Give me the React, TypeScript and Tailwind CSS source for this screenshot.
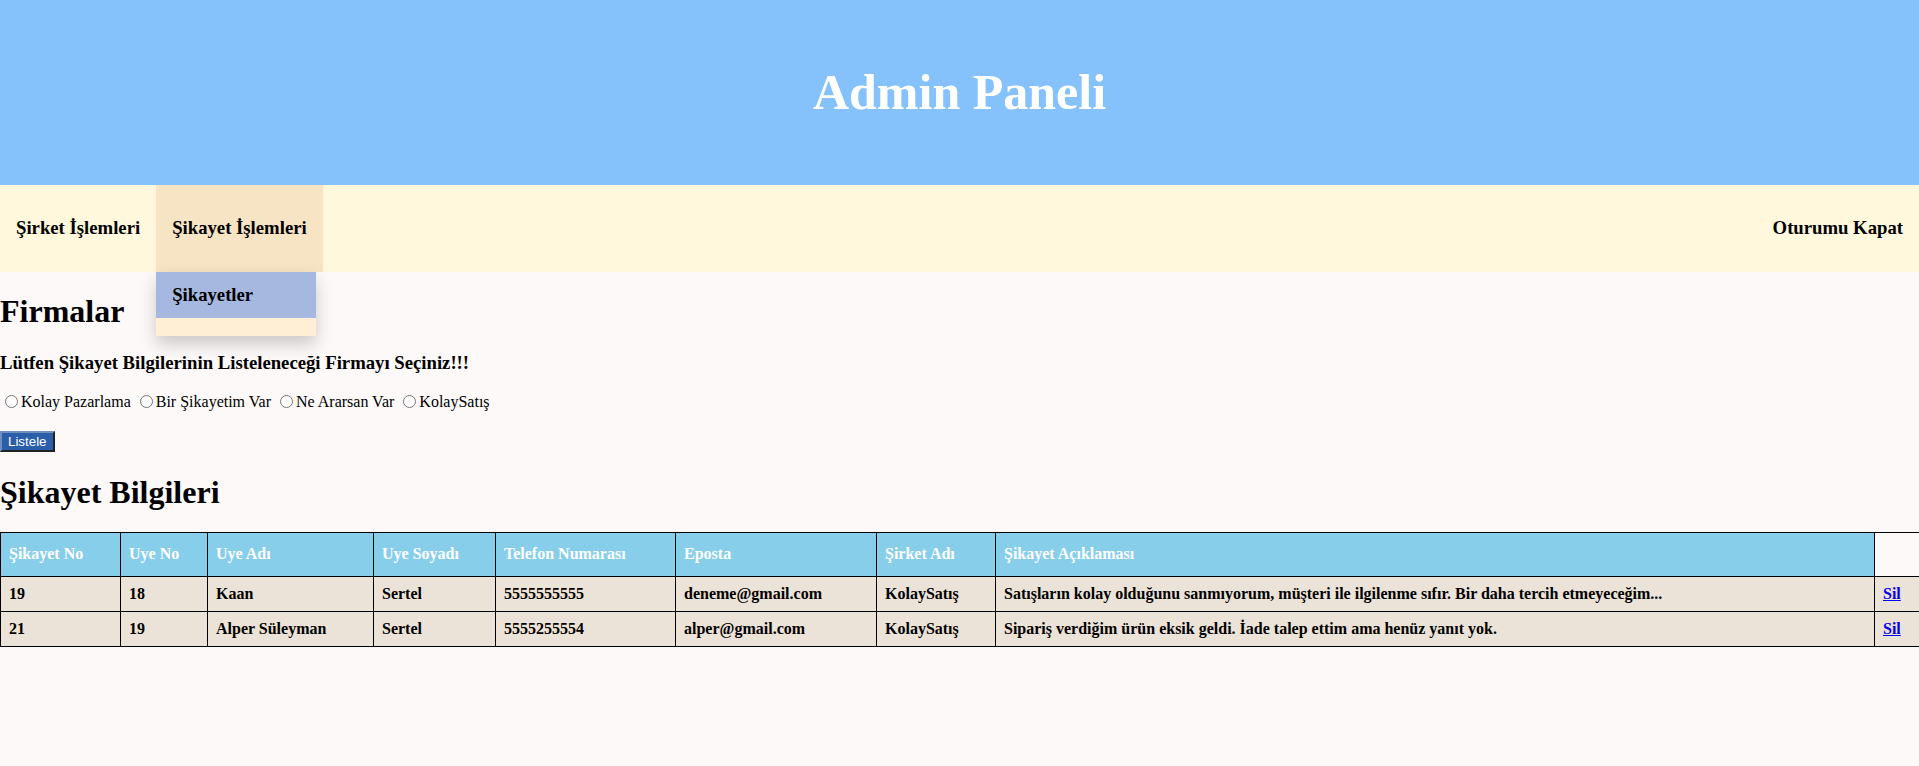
import React from 'react';

const firms = ["Kolay Pazarlama", "Bir Şikayetim Var", "Ne Ararsan Var", "KolaySatış"];

const headers = [
    "Şikayet No", "Uye No", "Uye Adı", "Uye Soyadı", "Telefon Numarası", "Eposta", "Şirket Adı", "Şikayet Açıklaması",
];

const colWidths = [120, 87, 166, 122, 180, 201, 119, 879, 45];

const rows = [
    ["19", "18", "Kaan", "Sertel", "5555555555", "deneme@gmail.com", "KolaySatış", "Satışların kolay olduğunu sanmıyorum, müşteri ile ilgilenme sıfır. Bir daha tercih etmeyeceğim..."],
    ["21", "19", "Alper Süleyman", "Sertel", "5555255554", "alper@gmail.com", "KolaySatış", "Sipariş verdiğim ürün eksik geldi. İade talep ettim ama henüz yanıt yok."],
];

export default function App() {
    return (
        <div className="min-h-[766px] bg-[#fdf9f8] text-black font-['Liberation_Serif','Times_New_Roman',serif]">
            {/* header */}
            <header className="h-[185px] bg-[#85c1fa] flex items-center justify-center">
                <h1 className="text-[50px] font-bold text-white leading-none pb-[2px]">Admin Paneli</h1>
            </header>

            {/* nav */}
            <nav className="relative h-[87px] bg-[#fff8dc] flex items-stretch text-[18.72px] font-bold">
                <a className="flex items-center px-4">Şirket İşlemleri</a>
                <div className="relative">
                    <a className="h-full flex items-center px-4 bg-[#f7e4c4]">Şikayet İşlemleri</a>
                    <div className="absolute left-0 top-full w-[160px] z-10 bg-[#ffefd5] shadow-[0_8px_16px_rgba(0,0,0,0.2)] pb-[18px]">
                        <a className="block px-4 py-3 bg-[#a7b8e0] leading-[22px]">Şikayetler</a>
                    </div>
                </div>
                <div className="flex-1" />
                <a className="flex items-center px-4">Oturumu Kapat</a>
            </nav>

            <main>
                <h1 className="text-[32px] font-bold leading-[36.8px] my-[21.44px]">Firmalar</h1>
                <h3 className="text-[18.72px] font-bold leading-[21.5px] my-[18.72px]">
                    Lütfen Şikayet Bilgilerinin Listeleneceği Firmayı Seçiniz!!!
                </h3>
                <div className="text-[16px] leading-[18.4px]">
                    {firms.map((f) => (
                        <React.Fragment key={f}>
                            <input type="radio" name="firma" className="m-[3px_3px_0_5px] align-[-1px]" />
                            {f}{" "}
                        </React.Fragment>
                    ))}
                </div>
                <div className="h-[20px]" />
                <button className="block h-[21px] px-[6px] bg-[#2a5ea9] text-white text-[13.33px] leading-[15px] font-['Liberation_Sans',Arial,sans-serif] border-2 border-t-[#6f8fbf] border-l-[#6f8fbf] border-r-[#222] border-b-[#222]">
                    Listele
                </button>

                <h1 className="text-[32px] font-bold leading-[36.8px] my-[21.44px]">Şikayet Bilgileri</h1>

                <table className="w-full table-fixed border-collapse text-[16px] font-bold leading-[18px]">
                    <colgroup>
                        {colWidths.map((w, i) => (
                            <col key={i} style={{ width: w }} />
                        ))}
                    </colgroup>
                    <thead>
                        <tr className="h-[44px]">
                            {headers.map((h) => (
                                <th key={h} className="border border-black bg-[#87ceeb] text-white text-left px-2 py-3">
                                    {h}
                                </th>
                            ))}
                            <th className="border border-black" />
                        </tr>
                    </thead>
                    <tbody>
                        {rows.map((r) => (
                            <tr key={r[0]} className="h-[34px] bg-[#ece3d8]">
                                {r.map((c, i) => (
                                    <td key={i} className="border border-black px-2 py-2 whitespace-nowrap">{c}</td>
                                ))}
                                <td className="border border-black px-2 py-2">
                                    <a href="#" className="text-[#0000ee] underline">Sil</a>
                                </td>
                            </tr>
                        ))}
                    </tbody>
                </table>
            </main>
        </div>
    );
}
